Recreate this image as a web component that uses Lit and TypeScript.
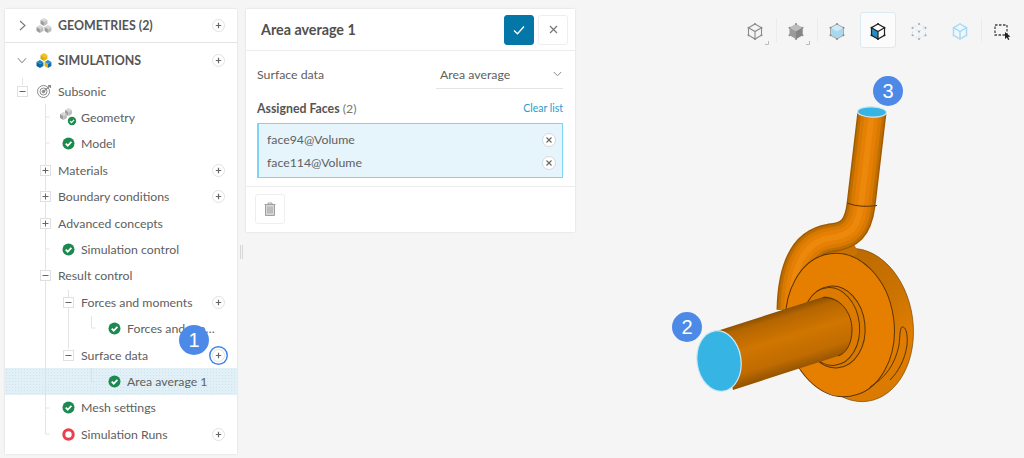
import { LitElement, html, css, svg, nothing } from "lit";
import { customElement } from "lit/decorators.js";

const check = (s = 13) => html`<svg width=${s} height=${s} viewBox="0 0 13 13"><circle cx="6.5" cy="6.5" r="6" fill="#1c8a4e"/><path d="M3.7 6.7l2 2 3.7-3.8" fill="none" stroke="#fff" stroke-width="1.7"/></svg>`;
const redRing = html`<svg width="13" height="13" viewBox="0 0 13 13"><circle cx="6.5" cy="6.5" r="4.7" fill="#fff" stroke="#e8404c" stroke-width="3"/></svg>`;
const cube = (x: number, y: number, a: string, b: string, c: string) => svg`<g transform="translate(${x} ${y}) scale(1.15)"><path d="M0 1.7L3 0l3 1.7-3 1.7z" fill=${a}/><path d="M0 1.7l3 1.7V7L0 5.3z" fill=${b}/><path d="M6 1.7L3 3.4V7l3-1.7z" fill=${c}/></g>`;
const G = ["#d6d6d6", "#9c9c9c", "#bdbdbd"] as const;
const geoIcon = html`<svg width="16" height="16" viewBox="0 0 16 16">${cube(4.5, 0, ...G)}${cube(0.5, 7, ...G)}${cube(8.5, 7, ...G)}</svg>`;
const simIcon = html`<svg width="16" height="16" viewBox="0 0 16 16">${cube(4.5, 0, "#f0c419", "#d9a90c", "#e8b90e")}${cube(0.5, 7, "#1f86c4", "#0d5f99", "#0f6fae")}${cube(8.5, 7, "#2a8fca", "#e0b00f", "#0f6fae")}</svg>`;
const subIcon = html`<svg width="16" height="16" viewBox="0 0 16 16" fill="none" stroke="#8a8a8a"><circle cx="7.5" cy="8.5" r="6"/><circle cx="7.5" cy="8.5" r="3.5"/><circle cx="7.5" cy="8.5" r="1.3" fill="#8a8a8a"/><path d="M8 8L14 3M12 2.6h2.5V5" stroke-width="1.1"/></svg>`;
const modelGeo = html`<svg width="18" height="18" viewBox="0 0 18 18" class="over">${cube(6, 0, ...G)}${cube(1, 4, ...G)}<circle cx="13" cy="13" r="4.2" fill="#1c8a4e"/><path d="M11 13.1l1.5 1.5 2.6-2.7" fill="none" stroke="#fff" stroke-width="1.3"/></svg>`;

type Row = { t: string; lv: string; tog?: string; icon?: any; plus?: boolean; sel?: boolean; ring?: boolean };
const rows: Row[] = [
  { t: "Subsonic", lv: "root", tog: "-", icon: subIcon },
  { t: "Geometry", lv: "l2", icon: modelGeo },
  { t: "Model", lv: "l2", icon: check() },
  { t: "Materials", lv: "l1", tog: "+", plus: true },
  { t: "Boundary conditions", lv: "l1", tog: "+", plus: true },
  { t: "Advanced concepts", lv: "l1", tog: "+" },
  { t: "Simulation control", lv: "l2", icon: check() },
  { t: "Result control", lv: "l1", tog: "-" },
  { t: "Forces and moments", lv: "l2", tog: "-", plus: true },
  { t: "Forces and moments 1", lv: "l3", icon: check() },
  { t: "Surface data", lv: "l2", tog: "-", plus: true, ring: true },
  { t: "Area average 1", lv: "l3", icon: check(), sel: true },
  { t: "Mesh settings", lv: "l2", icon: check() },
  { t: "Simulation Runs", lv: "l2", icon: redRing, plus: true },
];

const box = (body: any, corner = false) => html`<svg width="26" height="26" viewBox="0 0 26 26">${body}${corner ? svg`<path d="M24.5 21v3.500h-3.500" fill="none" stroke="#bbb"/>` : nothing}</svg>`;
const hex = "M11 4l6.5 3.700v7.600L11 19l-6.500-3.700V7.700z";
const dots = (c: string) => svg`<g fill=${c}><circle cx="11" cy="4" r="1"/><circle cx="17.5" cy="7.700" r="1"/><circle cx="17.500" cy="15.300" r="1"/><circle cx="11" cy="19" r="1"/><circle cx="4.500" cy="15.300" r="1"/><circle cx="4.500" cy="7.700" r="1"/></g>`;
const inner = "M4.500 7.700l6.500 3.800 6.500-3.800M11 11.500V19";
const tools = [
  { i: box(svg`<path d=${hex} fill="none" stroke="#8a8a8a" stroke-width="1.100"/><path d=${inner} fill="none" stroke="#8a8a8a" stroke-width="1.100"/>${dots("#8a8a8a")}`, true), sep: true },
  { i: box(svg`<path d=${hex} fill="#9a9a9a"/><path d="M4.500 7.700L11 4l6.500 3.700-6.500 3.800z" fill="#bcbcbc"/><path d="M11 11.500l6.500-3.800v7.600L11 19z" fill="#858585"/>${dots("#8a8a8a")}`, true), sep: true },
  { i: box(svg`<path d=${hex} fill="#a8d8f0"/><path d="M4.500 7.700L11 4l6.500 3.700-6.500 3.800z" fill="#cfe9f7"/><path d=${hex} fill="none" stroke="#aaa"/>${dots("#8a8a8a")}`), sep: false },
  { i: box(svg`<path d=${hex} fill="#fff"/><path d="M4.500 7.700l6.500 3.800V19l-6.500-3.700z" fill="#1f8fc4"/><path d=${hex} fill="none" stroke="#222" stroke-width="1.200"/><path d=${inner} fill="none" stroke="#222" stroke-width="1.200"/>${dots("#222")}`), sep: false, on: true },
  { i: box(svg`<path d=${hex} fill="none" stroke="#cde3ee" stroke-dasharray="2 2"/><path d=${inner} fill="none" stroke="#cde3ee" stroke-dasharray="2 2"/>${dots("#a8a8a8")}<circle cx="11" cy="11.500" r="1" fill="#a8a8a8"/>`), sep: false },
  { i: box(svg`<path d=${hex} fill="#eef7fc" stroke="#a5d8f2" stroke-width="1.400"/><path d=${inner} fill="none" stroke="#a5d8f2" stroke-width="1.400"/>${dots("#b4dff5")}`), sep: true },
  { i: box(svg`<rect x="5" y="5" width="12" height="10" fill="none" stroke="#444" stroke-width="1.300" stroke-dasharray="2.500 1.500"/><path d="M15 12l0 7 1.800-1.600 1.400 2.600 1.200-.6-1.300-2.500 2.300-.3z" fill="#222"/>`), sep: false },
];

const PIPE = "M872 112L861 205C858 228 850 236 830 238C805 242 792 265 791 310";

@customElement("pump-model")
class PumpModel extends LitElement {
  static styles = css`:host{display:block;width:1024px;height:458px}svg{display:block}`;
  render() {
    return html`<svg width="1024" height="458" viewBox="0 0 1024 458">
      <defs>
        <linearGradient id="tube" gradientUnits="userSpaceOnUse" x1="768" y1="314" x2="786" y2="373"><stop offset="0" stop-color="#8a4f00"/><stop offset=".12" stop-color="#b56600"/><stop offset=".45" stop-color="#d07500"/><stop offset=".8" stop-color="#c06c00"/><stop offset="1" stop-color="#955400"/></linearGradient>
        <linearGradient id="rim" x1="0.300" y1="0" x2="0.700" y2="1"><stop offset="0" stop-color="#b86800"/><stop offset=".45" stop-color="#c97200"/><stop offset=".75" stop-color="#e07d00"/><stop offset="1" stop-color="#d87900"/></linearGradient>
      </defs>
      <ellipse cx="857" cy="325" rx="56" ry="77" transform="rotate(-8 857 325)" fill="url(#rim)" stroke="#6b3f05" stroke-width=".6"/>
      <path d="M848 232C820 232 795 250 782 300L800 320L858 252Z" fill="#c97200"/>
      <g fill="none">
        <path d=${PIPE} stroke="#a05b00" stroke-width="29"/>
        <path d=${PIPE} stroke="#c06d00" stroke-width="26"/>
        <path d=${PIPE} stroke="#d87900" stroke-width="21"/>
        <path d=${PIPE} stroke="#e58005" stroke-width="14"/>
        <path d=${PIPE} stroke="#ec880c" stroke-width="6"/>
      </g>
      <path d="M847 203Q860 208 877 205.500" fill="none" stroke="#5a3405" stroke-width="1"/>
      <ellipse cx="840" cy="325" rx="54" ry="72" transform="rotate(-8 840 325)" fill="#e67f00" stroke="#5a3405" stroke-width="1"/>
      <g fill="none" stroke="#5a3405" stroke-width="1">
        <path d="M870 387C885 378 895 365 899 345C900 335 900 328 902 327C906 326 908 335 907 345C905 360 898 372 890 380"/>
        <ellipse cx="834" cy="327" rx="31" ry="41" transform="rotate(-6 834 327)" fill="#d97a00"/>
        <ellipse cx="831" cy="326.500" rx="28.500" ry="39" transform="rotate(-6 831 326.500)" fill="#dc7b00"/>
      </g>
      <path d="M717 331L823 297L825 296.500C840 297 852 312 852 330C852 345 845 354 838 356L733 390Z" fill="url(#tube)"/>
      <path d="M823 297.500C840 297 852 312 852 330C852 345 845 354 838 356" fill="none" stroke="#5a3405" stroke-width="1"/>
      <ellipse cx="719" cy="361" rx="22" ry="30.500" transform="rotate(-8 719 361)" fill="#36b4e3" stroke="#cfe9f5" stroke-width="1.200"/>
      <ellipse cx="872" cy="112" rx="14.500" ry="5.200" transform="rotate(2 872 112)" fill="#36b4e3" stroke="#cfe9f5" stroke-width="1.200"/>
    </svg>`;
  }
}

@customElement("app-root")
class AppRoot extends LitElement {
  static styles = css`
    :host{display:block;width:1024px;height:458px;overflow:hidden;font-family:Lato,"Open Sans",sans-serif;color:#606060;font-size:12.3px}
    .page{position:relative;width:1024px;height:458px;background:#f5f5f5;display:flex;align-items:flex-start;padding:9px 0 0 5px;box-sizing:border-box}
    .canvas{position:absolute;inset:0}
    .side{position:relative;width:232px;height:445px;background:#fff;box-shadow:0 0 2px rgba(0,0,0,.12);flex:none}
    .lines{position:absolute;left:-5px;top:-9px;pointer-events:none}
    .head{height:34px;display:flex;align-items:center;padding:0 12px 0 12px;font-weight:700;color:#555;gap:6px;position:relative;font-size:12.4px;box-sizing:border-box}
    .head.first{border-bottom:1px solid #e4e4e4}
    .head.second{height:35px}
    .chev{width:10px;display:flex;justify-content:center;margin-right:3px}
    .slot{width:16px;height:16px;display:flex;align-items:center;justify-content:center;flex:none;position:relative}
    .rows{position:relative}
    .row{height:26.4px;display:flex;align-items:center;gap:5px;padding-right:12px;box-sizing:border-box;white-space:nowrap;position:relative}
    .row.sel{background-color:rgba(200,225,238,.55);background-image:radial-gradient(#cfe3ee 0.6px,transparent 0.7px);background-size:3px 3px}
    .row.root{padding-left:9px;gap:6px}
    .row.l1{padding-left:32px}
    .row.l2{padding-left:55px}
    .row.l3{padding-left:101px}
    .label{overflow:hidden;text-overflow:ellipsis;min-width:0;flex:0 1 auto}
    .row.l3 .label{max-width:97px}
    .over{margin-top:-2px;flex:none}
    .tog{width:9px;height:9px;border:1px solid #e0e0e0;background:#fff;display:flex;align-items:center;justify-content:center;box-sizing:content-box}
    .plus{margin-left:auto;width:11px;height:11px;flex:none;border:1px solid #e2e2e2;border-radius:50%;background:#fff;display:flex;align-items:center;justify-content:center;position:relative}
    .plus.ring{box-shadow:0 0 0 1.500px #fff,0 0 0 3px #3f84e5}
    .grip{flex:none;width:9px;height:445px;display:flex;align-items:center;justify-content:center;gap:1px}
    .grip i{display:block;width:1px;height:14px;background:#d6d6d6;margin-top:40px}
    .panel{flex:none;width:329px;height:223px;background:#fff;box-shadow:0 0 2px rgba(0,0,0,.12);position:relative}
    .ph{height:41px;border-bottom:1px solid #ececec;display:flex;align-items:center;padding:0 7px 0 15px;gap:4px;box-sizing:content-box}
    .ph h1{margin:0 auto 0 0;font-size:14.3px;font-weight:700;color:#505050}
    .btn{width:30px;height:30px;box-sizing:border-box;border-radius:3px;display:flex;align-items:center;justify-content:center;border:1px solid #eee;background:#fff}
    .btn.ok{background:#0477a8;border-color:#0477a8}
    .pb{padding:0 12px 0 11px}
    .fr{display:flex;justify-content:space-between;height:46px;align-items:center}
    .sel-box{width:127px;height:29px;margin-top:1px;box-sizing:border-box;border-bottom:1px solid #e4e4e4;display:flex;align-items:center;justify-content:space-between;padding:0 1px 0 4px}
    .af{display:flex;justify-content:space-between;align-items:center;height:16px;margin-top:3px}
    .af b{color:#555;font-weight:700}
    .af span span{color:#777}
    .clear{font-size:10.5px;color:#2a9bd0}
    .list{margin-top:7px;height:55px;box-sizing:border-box;background:#e6f5fb;border:1px solid #7fd3f3;border-left-width:2px;padding:4px 6px 0 8px}
    .it{height:23px;display:flex;align-items:center;justify-content:space-between}
    .x{width:12px;height:12px;border:1px solid #d8d8d8;border-radius:50%;background:#fff;display:flex;align-items:center;justify-content:center}
    .pf{border-top:1px solid #ececec;margin-top:8px;padding:7px 0 0 9px}
    .tools{position:absolute;left:734.500px;top:12px;display:flex;align-items:center}
    .tool{width:36px;height:36px;display:flex;align-items:center;justify-content:center;margin:0 2.500px;box-sizing:border-box;border:1px solid transparent;border-radius:3px;padding:5px 0 0 4px}
    .tool.on{background:#fbfbfb;border-color:#d9eaf4}
    .sep{width:1px;height:24px;background:#ececec;margin:0 -1px 0 0}
    .badge{position:absolute;width:30px;height:30px;border-radius:50%;background:#4d8ae8;color:#fff;display:flex;align-items:center;justify-content:center;font:20px/1 "Liberation Sans",Arial,sans-serif}
    .b1{left:179px;top:325px}.b2{left:672px;top:312px}.b3{left:873px;top:76px}
  `;

  plusIcon() {
    return html`<svg width="7" height="7" viewBox="0 0 7 7"><path d="M3.5 .8v5.400M.8 3.5h5.400" stroke="#666" stroke-width="1.200"/></svg>`;
  }
  xIcon() {
    return html`<svg width="6" height="6" viewBox="0 0 6 6"><path d="M.5.5l5 5M5.5.5l-5 5" stroke="#666" stroke-width="1.100"/></svg>`;
  }
  togIcon(kind: string) {
    return html`<span class="tog"><svg width="7" height="7" viewBox="0 0 7 7"><path d=${kind === "+" ? "M3.5 .5v6M.5 3.5h6" : "M.5 3.5h6"} stroke="#666"/></svg></span>`;
  }
  renderRow(r: Row) {
    return html`<div class="row ${r.lv} ${r.sel ? "sel" : ""}">
      ${r.tog ? html`<span class="slot">${this.togIcon(r.tog)}</span>` : nothing}
      ${r.icon ? html`<span class="slot">${r.icon}</span>` : nothing}
      <span class="label">${r.t}</span>
      ${r.plus ? html`<span class="plus ${r.ring ? "ring" : ""}">${this.plusIcon()}</span>` : nothing}
    </div>`;
  }
  render() {
    return html`<div class="page">
      <div class="canvas"><pump-model></pump-model></div>
      <aside class="side">
        <svg class="lines" width="237" height="458" fill="none" stroke="#e4e4e4">
          <path d="M22.5 78v7M45.5 104v330h4M45.5 117h4M45.5 143h4M45.5 249h4M45.5 408h4M68.5 290v59M91.5 316v12h4M91.5 368v14h4"/>
        </svg>
        <div class="head first">
          <span class="chev"><svg width="7" height="11" viewBox="0 0 7 11"><path d="M1 1l5 4.500-5 4.500" fill="none" stroke="#777" stroke-width="1.100"/></svg></span>
          <span class="slot">${geoIcon}</span><span>GEOMETRIES (2)</span>
          <span class="plus">${this.plusIcon()}</span>
        </div>
        <div class="head second">
          <span class="chev"><svg width="11" height="7" viewBox="0 0 11 7"><path d="M1 1l4.500 5 4.500-5" fill="none" stroke="#777" stroke-width="1.100"/></svg></span>
          <span class="slot">${simIcon}</span><span>SIMULATIONS</span>
          <span class="plus">${this.plusIcon()}</span>
        </div>
        <div class="rows">${rows.map((r) => this.renderRow(r))}</div>
      </aside>
      <div class="grip"><i></i><i></i></div>
      <section class="panel">
        <div class="ph"><h1>Area average 1</h1>
          <span class="btn ok"><svg width="12" height="10" viewBox="0 0 12 10"><path d="M1 5.500l3.500 3.300L11 1.500" fill="none" stroke="#fff" stroke-width="1.300"/></svg></span>
          <span class="btn"><svg width="9" height="9" viewBox="0 0 9 9"><path d="M1 1l7 7M8 1L1 8" stroke="#777" stroke-width="1.200"/></svg></span>
        </div>
        <div class="pb">
          <div class="fr"><span>Surface data</span>
            <span class="sel-box"><span>Area average</span><svg width="9" height="6" viewBox="0 0 9 6"><path d="M.8 1l3.700 3.800L8.200 1" fill="none" stroke="#888"/></svg></span>
          </div>
          <div class="af"><span><b>Assigned Faces</b> <span>(2)</span></span><span class="clear">Clear list</span></div>
          <div class="list">
            <div class="it"><span>face94@Volume</span><span class="x">${this.xIcon()}</span></div>
            <div class="it"><span>face114@Volume</span><span class="x">${this.xIcon()}</span></div>
          </div>
        </div>
        <div class="pf"><span class="btn"><svg width="12" height="14" viewBox="0 0 12 14" fill="none" stroke="#a0a0a0"><path d="M.5 2.500h11M4 2.500V1h4v1.500"/><path d="M1.500 2.500h9V13.500h-9z" fill="#d8d8d8"/><path d="M4 4.500v7M6 4.500v7M8 4.500v7"/></svg></span></div>
      </section>
      <div class="tools">
        ${tools.map((t) => html`<span class="tool ${t.on ? "on" : ""}">${t.i}</span>${t.sep ? html`<span class="sep"></span>` : nothing}`)}
      </div>
      <span class="badge b1">1</span><span class="badge b2">2</span><span class="badge b3">3</span>
    </div>`;
  }
}
